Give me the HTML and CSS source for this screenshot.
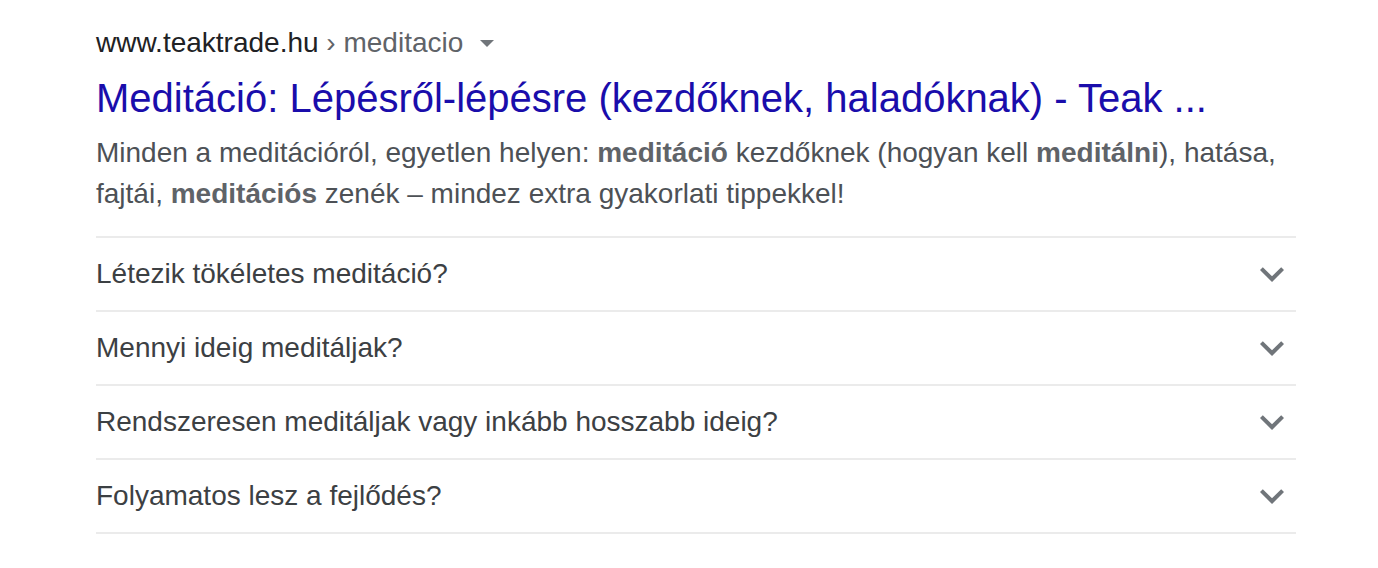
FILE: index.html
```html
<!DOCTYPE html>
<html lang="hu">
<head>
<meta charset="utf-8">
<link rel="stylesheet" href="styles.css">
</head>
<body>
<div class="result">
  <div class="cite"><span class="host">www.teaktrade.hu</span><span class="path"> › meditacio</span><span class="caret"></span></div>
  <h3 class="title">Meditáció: Lépésről-lépésre (kezdőknek, haladóknak) - Teak ...</h3>
  <div class="snippet">Minden a meditációról, egyetlen helyen: <b>meditáció</b> kezdőknek (hogyan kell <b>meditálni</b>), hatása, fajtái, <b>meditációs</b> zenék – mindez extra gyakorlati tippekkel!</div>
  <div class="faq">
    <div class="q"><span>Létezik tökéletes meditáció?</span><svg class="chev" viewBox="0 0 24 24"><path d="M16.59 8.59L12 13.17 7.41 8.59 6 10l6 6 6-6z"/></svg></div>
    <div class="q"><span>Mennyi ideig meditáljak?</span><svg class="chev" viewBox="0 0 24 24"><path d="M16.59 8.59L12 13.17 7.41 8.59 6 10l6 6 6-6z"/></svg></div>
    <div class="q"><span>Rendszeresen meditáljak vagy inkább hosszabb ideig?</span><svg class="chev" viewBox="0 0 24 24"><path d="M16.59 8.59L12 13.17 7.41 8.59 6 10l6 6 6-6z"/></svg></div>
    <div class="q"><span>Folyamatos lesz a fejlődés?</span><svg class="chev" viewBox="0 0 24 24"><path d="M16.59 8.59L12 13.17 7.41 8.59 6 10l6 6 6-6z"/></svg></div>
  </div>
</div>
</body>
</html>
```
FILE: styles.css
```css
html, body { margin: 0; padding: 0; background: #fff; }
body { font-family: "Liberation Sans", Arial, sans-serif; }
.result { width: 1200px; margin-left: 96px; padding-top: 25px; }
.cite { font-size: 28px; line-height: 36px; display: flex; align-items: center; }
.host { color: #202124; }
.path { color: #5f6368; white-space: pre; }
.caret { width: 0; height: 0; border-left: 7px solid transparent; border-right: 7px solid transparent; border-top: 7px solid #70757a; margin-left: 17px; margin-top: 1px; }
.title { margin: 11px 0 0; font-weight: normal; font-size: 40px; line-height: 52px; color: #1a0dab; }
.snippet { margin-top: 8px; font-size: 28px; line-height: 41px; color: #4d5156; }
.snippet b { color: #5f6368; }
.faq { margin-top: 22px; border-top: 2px solid #ebebeb; }
.q { height: 72px; border-bottom: 2px solid #ebebeb; display: flex; align-items: center; justify-content: space-between; font-size: 28px; color: #3c4043; }
.chev { width: 48px; height: 48px; fill: #70757a; }
```
